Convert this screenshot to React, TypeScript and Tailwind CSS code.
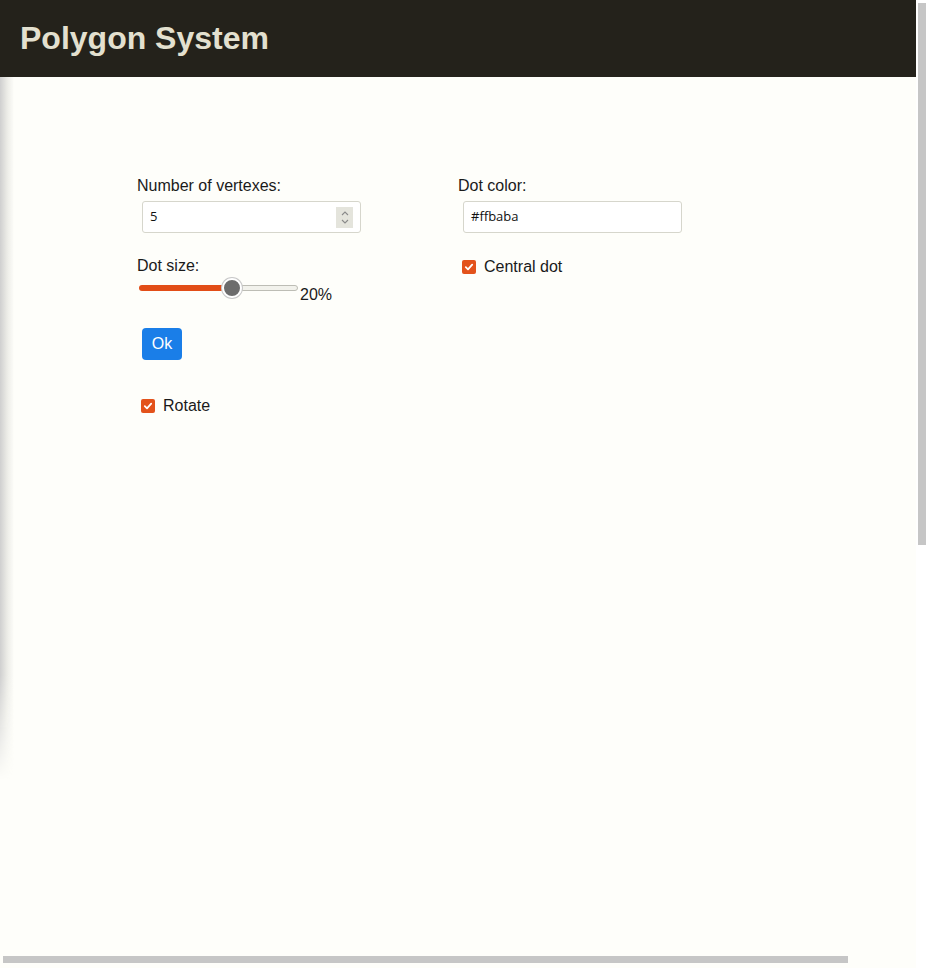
import React from "react";

const font = { fontFamily: '"Liberation Sans", Arial, sans-serif' };

const Label = ({ children }: { children?: React.ReactNode }) => (
  <div className="text-[16px] leading-[18px] text-[#1a1a1a]">{children}</div>
);

const Check = ({ label }: { label: string }) => (
  <label className="flex items-center text-[16px] leading-[18px] text-[#1a1a1a]">
    <span className="ml-[4px] mr-[3px] w-[14px] h-[14px] rounded-[2px] bg-[#e3521b] flex items-center justify-center">
      <svg width="10" height="10" viewBox="0 0 10 10">
        <path d="M1.8 5.2 L4 7.3 L8.2 2.6" fill="none" stroke="#fff" strokeWidth="1.8" strokeLinecap="round" strokeLinejoin="round" />
      </svg>
    </span>
    <span className="ml-[5px]">{label}</span>
  </label>
);

const Spinner = () => (
  <div className="w-[17px] h-[21px] bg-[#e4e4dc] flex flex-col items-center justify-center gap-[3px]">
    <svg width="8" height="5" viewBox="0 0 8 5">
      <path d="M1 4 L4 1 L7 4" fill="none" stroke="#8a8a8a" strokeWidth="1.1" />
    </svg>
    <svg width="8" height="5" viewBox="0 0 8 5">
      <path d="M1 1 L4 4 L7 1" fill="none" stroke="#8a8a8a" strokeWidth="1.1" />
    </svg>
  </div>
);

const Slider = ({ value }: { value: number }) => (
  <div className="flex items-end">
    <div className="ml-[2px] w-[159px] h-[24px] flex items-center pb-[6px]">
      <div className="h-[6px] rounded-l-full bg-[#e24d17]" style={{ width: `${value}px` }} />
      <div className="w-[20px] h-[20px] -mx-[10px] z-10 rounded-full bg-[#6c6c6c] border-2 border-white shadow-[0_0_0_1px_#c8c8c8]" />
      <div className="flex-1 h-[6px] rounded-r-full bg-[#f2f2ec] border border-[#bdbdb5]" />
    </div>
    <span className="ml-[2px] text-[16px] leading-[18px] text-[#1a1a1a] -mb-[1px]">20%</span>
  </div>
);

export default function App() {
  return (
    <div className="w-[928px] h-[968px] flex overflow-hidden bg-[#fefefa]" style={font}>
      <div className="w-[916px] h-full flex flex-col">
        <header className="h-[77px] shrink-0 bg-[#24221b] flex items-center px-[20px]">
          <h1 className="text-[32px] font-bold text-[#e3e0cf] leading-none -mt-[1px]">Polygon System</h1>
        </header>
        <div className="flex-1 flex">
          <div className="w-[14px] h-[703px] bg-gradient-to-r from-[#cfcfcf] via-[#ebebe6] to-transparent [mask-image:linear-gradient(to_bottom,black_85%,transparent)]" />
          <main className="flex-1 pl-[123px] pt-[100px]">
            <div className="grid grid-cols-[321px_321px] gap-y-[24px]">
              <div>
                <Label>Number of vertexes:</Label>
                <div className="ml-[5px] mt-[6px] w-[219px] h-[32px] border border-[#d6d6cc] rounded-[3px] bg-white flex items-center justify-between pl-[7px] pr-[7px]">
                  <span className="text-[13px] text-[#111]" style={{ fontFamily: '"Open Sans", "Noto Sans", sans-serif' }}>5</span>
                  <Spinner />
                </div>
              </div>
              <div>
                <Label>Dot color:</Label>
                <div className="ml-[5px] mt-[6px] w-[219px] h-[32px] border border-[#d6d6cc] rounded-[3px] bg-white flex items-center pl-[7px]">
                  <span className="text-[13px] text-[#111]" style={{ fontFamily: '"Open Sans", "Noto Sans", sans-serif' }}>#ffbaba</span>
                </div>
              </div>
              <div>
                <Label>Dot size:</Label>
                <div className="mt-[4px]">
                  <Slider value={93} />
                </div>
                <button className="mt-[25px] ml-[5px] w-[40px] h-[32px] rounded-[4px] bg-[#1a7ee8] text-white text-[16px] leading-none">
                  Ok
                </button>
                <div className="mt-[37px]">
                  <Check label="Rotate" />
                </div>
              </div>
              <div className="pt-[1px]">
                <Check label="Central dot" />
              </div>
            </div>
          </main>
        </div>
        <div className="h-[13px] shrink-0 flex items-start pt-[1px] px-[3px]">
          <div className="w-[845px] h-[7px] bg-[#c6c6c6]" />
        </div>
      </div>
      <div className="w-[12px] h-full bg-white flex justify-center pt-[3px]">
        <div className="w-[8px] h-[542px] bg-[#c6c6c6]" />
      </div>
    </div>
  );
}
